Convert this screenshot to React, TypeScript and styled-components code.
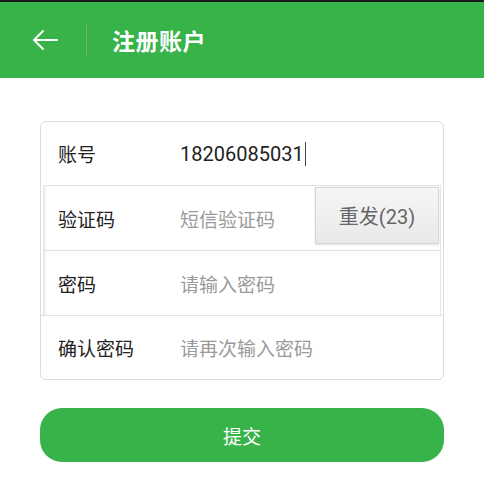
import React from "react";
import styled, { createGlobalStyle } from "styled-components";

const GlobalStyle = createGlobalStyle`
    body {
        margin : 0;
        background : #ffffff;
        font-family : Roboto, "Noto Sans CJK SC", sans-serif;
    }
`

const PageStyled = styled.div`
    width : 484px;
    min-height : 478px;
    background : #ffffff;
`

const StatusEdgeStyled = styled.div`
    height : 2px;
    background : #1a1a1a;
`

const HeaderStyled = styled.header`
    height : 76px;
    background : #37b34a;
    display : flex;
    align-items : center;
`

const BackButtonStyled = styled.button`
    width : 86px;
    height : 100%;
    padding : 0 0 0 32px;
    border : none;
    background : transparent;
    display : flex;
    align-items : center;
    cursor : pointer;
`

const DividerStyled = styled.span`
    width : 1px;
    height : 30px;
    background : #7ab84a;
`

const TitleStyled = styled.h1`
    margin : 0 0 0 25px;
    color : #ffffff;
    font-size : 23px;
    font-weight : 700;
    letter-spacing : 0.5px;
    font-family : "Noto Sans CJK SC", sans-serif;
`

const MainStyled = styled.main`
    padding : 43px 40px 0 40px;
`

const CardStyled = styled.div`
    border : 1px solid #dcdcdc;
    border-radius : 6px;
    overflow : hidden;
`

const RowStyled = styled.div<{height:number, framed?:boolean}>`
    height : ${(props) => props.height}px;
    display : flex;
    align-items : center;
    box-sizing : border-box;
    border-top : 1px solid #e2e2e2;
    ${(props) => props.framed && `
        margin : 0 2px 0 2px;
        border-left : 1px solid #e6e6e6;
        border-right : 1px solid #e6e6e6;
        box-shadow : inset 2px 0 2px rgba(0,0,0,0.06);
    `}
    &:first-child {
        border-top : none;
    }
`

const LabelStyled = styled.span<{indent?:number}>`
    width : 122px;
    padding-left : ${(props) => 17 - (props.indent || 0)}px;
    flex-shrink : 0;
    font-size : 19px;
    color : #222222;
    font-family : "Noto Sans CJK SC", sans-serif;
`

const ValueStyled = styled.span<{placeholder?:boolean}>`
    flex : 1;
    display : flex;
    align-items : center;
    font-size : ${(props) => props.placeholder ? 19 : 20}px;
    color : ${(props) => props.placeholder ? "#9a9a9a" : "#222222"};
    font-family : Roboto, "Noto Sans CJK SC", sans-serif;
`

const CaretStyled = styled.span`
    width : 1px;
    height : 24px;
    margin-left : 1px;
    background : #444444;
`

const ResendStyled = styled.button`
    width : 124px;
    height : 57px;
    margin-right : 1px;
    align-self : flex-start;
    margin-top : 1px;
    border : 1px solid #d6d6d6;
    background : linear-gradient(#f6f6f6, #e9e9e9);
    box-shadow : 0 1px 2px rgba(0,0,0,0.12);
    color : #666666;
    font-size : 20px;
    font-family : Roboto, "Noto Sans CJK SC", sans-serif;
    cursor : pointer;
`

const SubmitStyled = styled.button`
    width : 100%;
    height : 54px;
    margin-top : 28px;
    border : none;
    border-radius : 22px;
    background : #37b34a;
    color : #ffffff;
    font-size : 19px;
    font-family : "Noto Sans CJK SC", sans-serif;
    cursor : pointer;
`

const BackArrow = () => (
    <svg width="26" height="22" viewBox="0 0 26 22" fill="none" stroke="#ffffff" strokeWidth="2" strokeLinecap="round" strokeLinejoin="round">
        <path d="M25 11 H2" />
        <path d="M11 2 L2 11 L11 20" />
    </svg>
)

const App = () => {
    return (
        <PageStyled>
            <GlobalStyle />
            <StatusEdgeStyled />
            <HeaderStyled>
                <BackButtonStyled aria-label="back"><BackArrow /></BackButtonStyled>
                <DividerStyled />
                <TitleStyled>注册账户</TitleStyled>
            </HeaderStyled>
            <MainStyled>
                <CardStyled>
                    <RowStyled height={63}>
                        <LabelStyled>账号</LabelStyled>
                        <ValueStyled>18206085031<CaretStyled /></ValueStyled>
                    </RowStyled>
                    <RowStyled height={65} framed>
                        <LabelStyled indent={3}>验证码</LabelStyled>
                        <ValueStyled placeholder>短信验证码</ValueStyled>
                        <ResendStyled>重发(23)</ResendStyled>
                    </RowStyled>
                    <RowStyled height={65} framed>
                        <LabelStyled indent={3}>密码</LabelStyled>
                        <ValueStyled placeholder>请输入密码</ValueStyled>
                    </RowStyled>
                    <RowStyled height={64}>
                        <LabelStyled>确认密码</LabelStyled>
                        <ValueStyled placeholder>请再次输入密码</ValueStyled>
                    </RowStyled>
                </CardStyled>
                <SubmitStyled>提交</SubmitStyled>
            </MainStyled>
        </PageStyled>
    )
}

export default App
